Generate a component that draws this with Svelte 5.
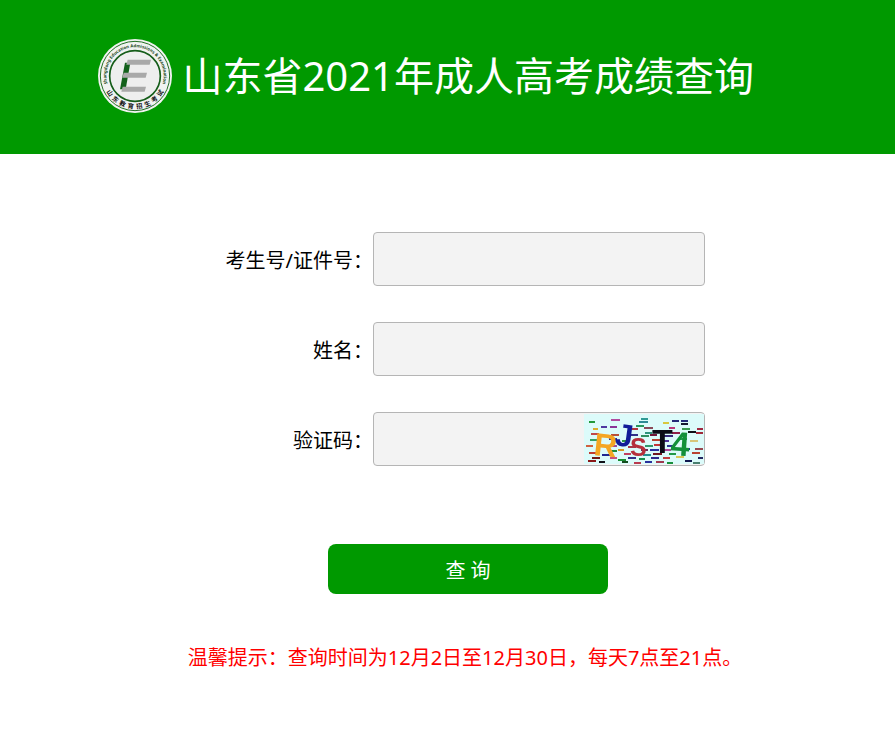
<script lang="ts">
  let candidateNo = $state('')
  let fullName = $state('')
  let captcha = $state('')

  const sealChars = ['山', '东', '教', '育', '招', '生', '考', '试']

  const letters = [
    { char: 'R', x: 9, y: 41, size: 32, fill: '#f5a623', turn: 6 },
    { char: 'J', x: 30, y: 31, size: 32, fill: '#101c98', turn: 8 },
    { char: 'S', x: 46, y: 42, size: 25, fill: '#b5303c', turn: 0 },
    { char: 'T', x: 68, y: 39, size: 34, fill: '#0c0c16', turn: 0 },
    { char: '4', x: 86, y: 41, size: 34, fill: '#12903a', turn: 4 },
  ]

  // x, y, width, colour
  const dashes: [number, number, number, string][] = [
    [5, 7, 6, '#219a3a'], [27, 5, 9, '#b04aa0'], [57, 4, 7, '#2e9a94'], [55, 7, 9, '#2e8a94'],
    [88, 6, 7, '#222878'], [97, 6, 7, '#222878'], [97, 9, 7, '#161830'], [79, 8, 6, '#d8c840'],
    [9, 14, 5, '#d8b030'], [17, 12, 6, '#5038a0'], [26, 12, 7, '#8a3498'], [48, 14, 6, '#b03840'],
    [60, 13, 9, '#8a4a58'], [52, 11, 8, '#28985c'], [98, 14, 8, '#3a9a50'], [113, 14, 6, '#a02840'],
    [85, 13, 6, '#b83878'], [104, 17, 8, '#101018'], [112, 18, 7, '#a02838'], [61, 18, 7, '#2c947c'],
    [7, 19, 8, '#c04848'], [27, 20, 8, '#b85038'], [46, 20, 8, '#303088'], [57, 21, 8, '#2e9060'],
    [66, 20, 7, '#701838'], [88, 18, 8, '#902048'], [80, 21, 9, '#38287c'], [6, 25, 7, '#329e60'],
    [25, 24, 8, '#28309c'], [38, 26, 7, '#2e9448'], [68, 25, 9, '#b84230'], [78, 26, 7, '#4e3098'],
    [96, 24, 7, '#249c50'], [106, 26, 8, '#d7c67b'], [2, 31, 7, '#cf6040'], [25, 31, 8, '#a04898'],
    [44, 32, 8, '#a83848'], [61, 31, 8, '#30986c'], [70, 30, 7, '#c03838'], [83, 31, 6, '#2e3498'],
    [111, 34, 8, '#984850'], [26, 36, 7, '#218a38'], [34, 35, 6, '#d89824'], [57, 35, 7, '#6e2858'],
    [66, 35, 9, '#28309c'], [80, 35, 7, '#b04898'], [99, 34, 7, '#28309c'], [5, 38, 8, '#c03c30'],
    [18, 40, 9, '#1f2890'], [40, 39, 7, '#c04060'], [59, 40, 8, '#228e90'], [69, 39, 9, '#701820'],
    [85, 39, 7, '#209848'], [108, 38, 8, '#b84430'], [8, 43, 8, '#701818'], [26, 43, 7, '#c85080'],
    [44, 43, 8, '#303088'], [55, 44, 6, '#18904c'], [67, 43, 8, '#2e2a8c'], [79, 43, 7, '#c04040'],
    [92, 42, 8, '#d8c858'], [114, 43, 5, '#222860'], [4, 46, 8, '#8a1818'], [15, 47, 6, '#101018'],
    [34, 45, 8, '#188c30'], [38, 47, 6, '#164c20'], [50, 48, 7, '#b83c50'], [61, 47, 7, '#28309c'],
    [72, 47, 8, '#a03850'], [83, 48, 6, '#18903c'], [101, 46, 7, '#101850'], [109, 48, 7, '#4a8070'],
  ]

  function handleSubmit(event: SubmitEvent): void {
    event.preventDefault()
  }
</script>

<header class="banner">
  <svg class="seal" viewBox="7 7 222 222" role="img" aria-label="山东教育招生考试">
    <defs>
      <path id="seal-arc" d="M 40 154 A 86 86 0 1 1 196 154" />
    </defs>
    <circle cx="118" cy="118" r="111" fill="#f1f3f1" />
    <circle cx="118" cy="118" r="104" fill="none" stroke="#246f24" stroke-width="3" />
    <circle cx="118" cy="118" r="76" fill="#eeeeee" stroke="#145c18" stroke-width="5" />
    <text class="seal-latin">
      <textPath href="#seal-arc" startOffset="50%" text-anchor="middle">Shangdong Education Admissions &amp; Examination</textPath>
    </text>
    {#each sealChars as char, i}
      <text class="seal-han" x="118" y="216" text-anchor="middle" transform="rotate({56 - i * 16} 118 118)">{char}</text>
    {/each}
    <path d="M 88 78 H 104 L 90 158 H 73 Z" fill="#12601a" />
    <path d="M 96 69 H 166 L 162 84 H 92 Z M 84 108 H 154 L 150 123 H 80 Z M 81 150 H 151 L 147 165 H 77 Z" fill="#a9a9a9" />
  </svg>
  <h1>山东省2021年成人高考成绩查询</h1>
</header>

<main>
  <form onsubmit={handleSubmit}>
    <div class="row">
      <label for="candidate-no">考生号/证件号：</label>
      <input id="candidate-no" type="text" bind:value={candidateNo} />
    </div>
    <div class="row">
      <label for="full-name">姓名：</label>
      <input id="full-name" type="text" bind:value={fullName} />
    </div>
    <div class="row">
      <label for="captcha">验证码：</label>
      <div class="captcha-field">
        <input id="captcha" type="text" autocomplete="off" bind:value={captcha} />
        <svg class="captcha" viewBox="0 0 120 50" aria-hidden="true">
          <rect width="120" height="50" fill="#dcfbfa" />
          <g class="captcha-ink">
            {#each dashes as [x, y, width, fill]}
              <rect {x} {y} {width} height="2" {fill} />
            {/each}
            {#each letters as { char, x, y, size, fill, turn }}
              <text {x} {y} {fill} font-size={size} transform="rotate({turn} {x} {y})">{char}</text>
            {/each}
          </g>
        </svg>
      </div>
    </div>
    <button type="submit">查 询</button>
  </form>
  <p class="tip">温馨提示：查询时间为12月2日至12月30日，每天7点至21点。</p>
</main>

<style>
  :global(body) {
    margin: 0;
    background: #fff;
    color: #000;
    font-family: 'Noto Sans', 'Noto Sans CJK SC', sans-serif;
    font-size: 20px;
    font-weight: 400;
  }

  .banner {
    display: flex;
    align-items: center;
    gap: 10px;
    box-sizing: border-box;
    min-height: 154px;
    padding: 0 11% 2px;
    background: #009900;
  }

  .seal {
    flex: none;
    width: 74px;
    height: 74px;
  }

  .seal-latin {
    font-family: 'Noto Sans', sans-serif;
    font-size: 13px;
    font-weight: 700;
    fill: #1c4a1c;
  }

  .seal-han {
    font-family: 'Noto Sans CJK SC', sans-serif;
    font-size: 19px;
    font-weight: 700;
    fill: #111;
  }

  h1 {
    margin: 0;
    color: #fff;
    font-size: 40px;
    font-weight: 400;
    line-height: 56px;
    white-space: nowrap;
  }

  main {
    display: flex;
    flex-direction: column;
    align-items: center;
    padding: 78px 0 40px 41px;
  }

  form {
    display: flex;
    flex-direction: column;
    gap: 36px;
    box-sizing: border-box;
    width: 100%;
    max-width: 490px;
  }

  .row {
    display: grid;
    grid-template-columns: 1fr 332px;
    align-items: center;
    padding-right: 8px;
  }

  label {
    text-align: right;
    white-space: nowrap;
  }

  input {
    box-sizing: border-box;
    width: 100%;
    height: 54px;
    padding: 0 12px;
    border: 1px solid #b5b5b5;
    border-radius: 4px;
    background: #f3f3f3;
    font: inherit;
    outline: none;
  }

  input:focus {
    border-color: #009900;
  }

  .captcha-field {
    position: relative;
  }

  .captcha-field input {
    display: block;
    padding-right: 130px;
  }

  .captcha {
    position: absolute;
    top: 2px;
    right: 1px;
    width: 120px;
    height: 50px;
    overflow: visible;
    cursor: pointer;
  }

  .captcha-ink {
    filter: blur(0.7px);
    font-family: 'Liberation Sans', sans-serif;
    font-weight: 700;
  }

  button {
    align-self: center;
    width: 280px;
    height: 50px;
    margin-top: 42px;
    padding: 0;
    border: 0;
    border-radius: 8px;
    background: #009900;
    color: #fff;
    font: inherit;
    cursor: pointer;
  }

  .tip {
    margin: 50px 0 0;
    padding-right: 6px;
    color: #ff0000;
    line-height: 28px;
  }
</style>
